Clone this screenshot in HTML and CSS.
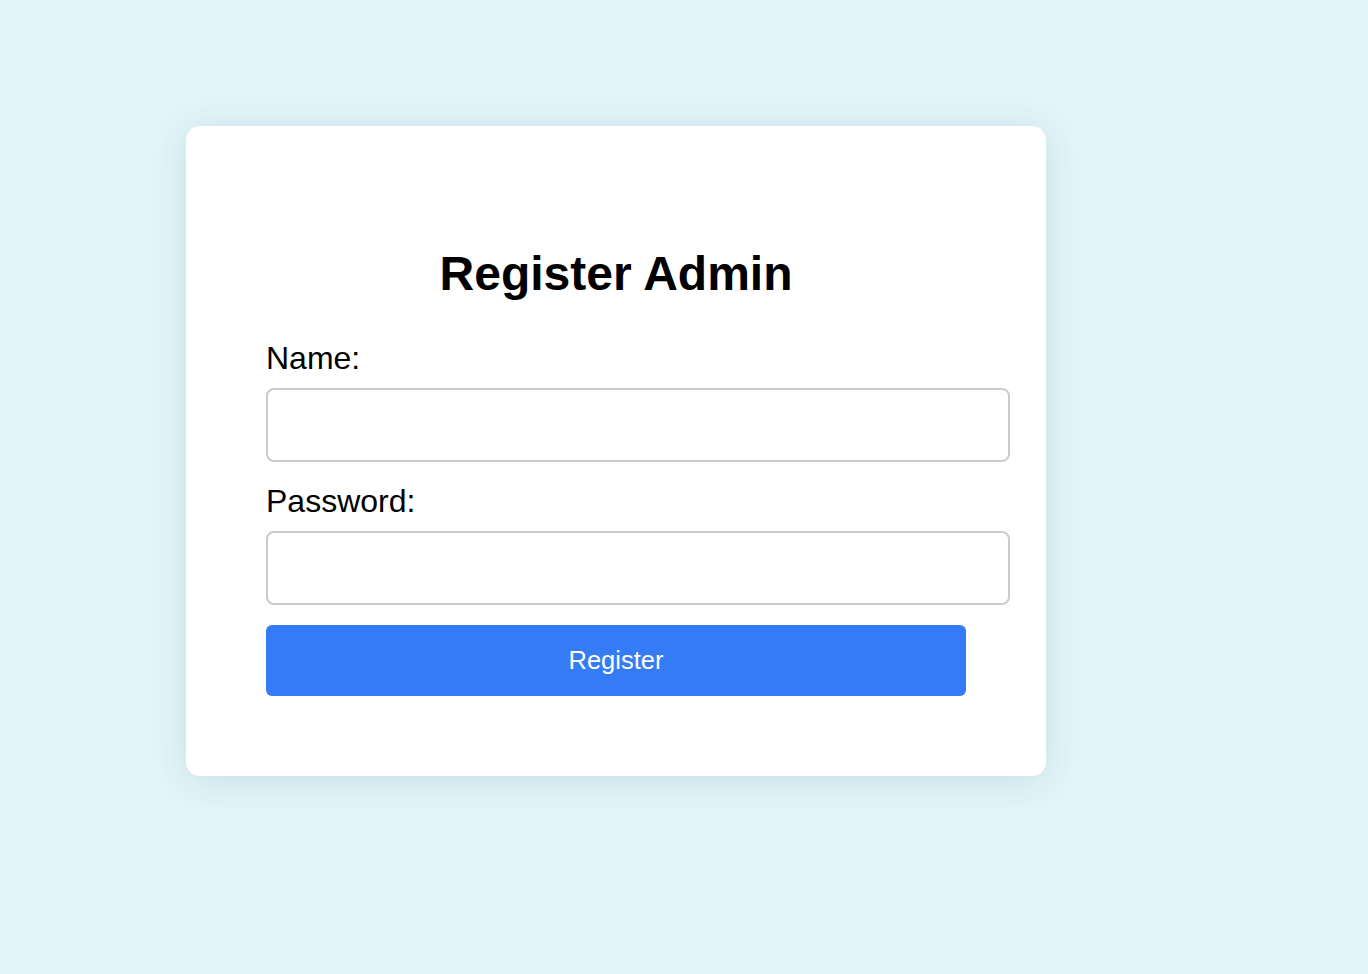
FILE: index.html
```html
<!DOCTYPE html>
<html lang="en">
<head>
<meta charset="utf-8">
<title>Register Admin</title>
<link rel="stylesheet" href="styles.css">
</head>
<body>
<main class="page">
  <form class="card">
    <h1 class="title">Register Admin</h1>
    <label class="label" for="name">Name:</label>
    <input class="field" id="name" type="text">
    <label class="label" for="password">Password:</label>
    <input class="field" id="password" type="password">
    <button class="btn" type="button">Register</button>
  </form>
</main>
</body>
</html>
```
FILE: styles.css
```css
html, body {
  margin: 0;
  padding: 0;
  background: #e2f5f9;
  font-family: "Liberation Sans", Arial, Helvetica, sans-serif;
  color: #000;
}

.page {
  min-height: 974px;
  box-sizing: border-box;
  padding: 126px 0 0 186px;
}

.card {
  width: 860px;
  box-sizing: border-box;
  padding: 80px;
  background: #fff;
  border-radius: 14px;
  box-shadow: 0 4px 36px rgba(40, 90, 110, 0.14);
}

.title {
  margin: 40px 0 38px;
  font-size: 48px;
  line-height: 56px;
  font-weight: 700;
  text-align: center;
}

.label {
  display: block;
  font-size: 32px;
  line-height: 36px;
  margin-bottom: 12px;
}

.field {
  display: block;
  box-sizing: content-box;
  width: 100%;
  height: 30px;
  padding: 20px;
  margin: 0 0 21px;
  border: 2px solid #cbcbcb;
  border-radius: 8px;
  background: #fff;
  font-family: inherit;
  font-size: 24px;
  outline: none;
}

.field + .btn {
  margin-top: -1px;
}

.btn {
  display: block;
  width: 100%;
  height: 71px;
  border: none;
  border-radius: 6px;
  background: #367bf6;
  color: #fff;
  font-family: inherit;
  font-size: 25.5px;
  cursor: pointer;
}
```
